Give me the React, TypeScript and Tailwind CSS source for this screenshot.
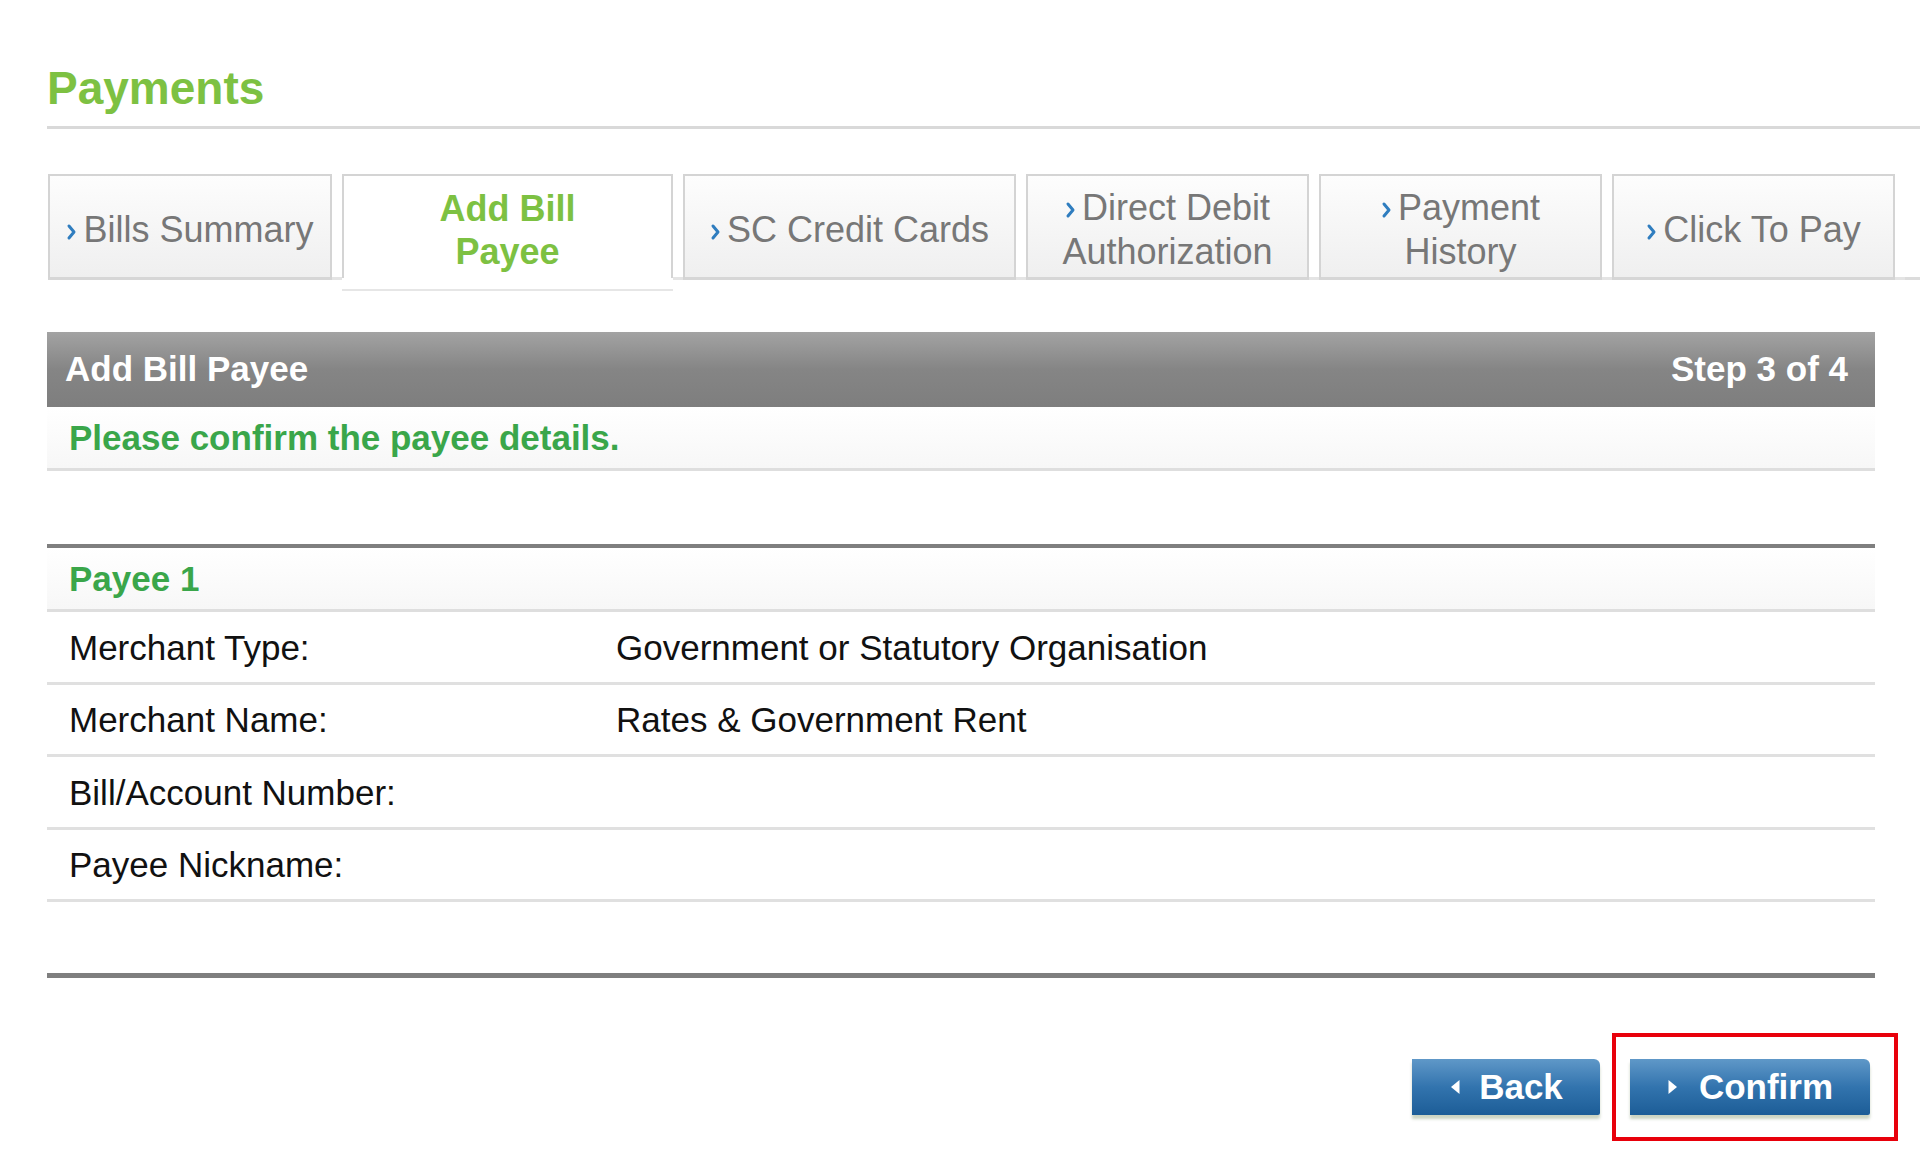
import React from 'react';

interface Tab {
  label: string[];
  active?: boolean;
  width: string;
}

const tabs: Tab[] = [
  { label: ['Bills Summary'], width: 'w-[284px]' },
  { label: ['Add Bill', 'Payee'], active: true, width: 'w-[331px]' },
  { label: ['SC Credit Cards'], width: 'w-[333px]' },
  { label: ['Direct Debit', 'Authorization'], width: 'w-[283px]' },
  { label: ['Payment', 'History'], width: 'w-[283px]' },
  { label: ['Click To Pay'], width: 'w-[283px]' },
];

const rows = [
  { label: 'Merchant Type:', value: 'Government or Statutory Organisation' },
  { label: 'Merchant Name:', value: 'Rates & Government Rent' },
  { label: 'Bill/Account Number:', value: '' },
  { label: 'Payee Nickname:', value: '' },
];

function Chevron() {
  return (
    <svg className="inline-block w-[11px] h-[18px] mr-[6px] align-[1px]" viewBox="0 0 11 18" fill="none">
      <path d="M3 3l5 6-5 6" stroke="#2f7dbf" strokeWidth={3} strokeLinecap="round" strokeLinejoin="round" />
    </svg>
  );
}

function Triangle({ dir }: { dir: 'left' | 'right' }) {
  return (
    <svg className="w-[12px] h-[18px] shrink-0" viewBox="0 0 12 18">
      {dir === 'left' ? <path d="M10.5 2v14L2 9z" fill="#fff" /> : <path d="M1.5 2v14L10 9z" fill="#fff" />}
    </svg>
  );
}

export default function App() {
  return (
    <div className="min-h-screen bg-white text-[#111]" style={{ fontFamily: '"Liberation Sans", Arial, sans-serif' }}>
      {/* Page title */}
      <div className="pl-[47px] pt-[62px]">
        <h1 className="text-[46px] leading-[52px] font-bold text-[#7dc142]">Payments</h1>
        <div className="mt-[12px] h-[3px] bg-[#d9d9d9]" />
      </div>

      {/* Tabs */}
      <div className="mt-[45px] pl-[48px] flex items-start">
        {tabs.map((tab, i) => (
          <React.Fragment key={i}>
            {tab.active ? (
              <div className={`${tab.width} shrink-0 h-[117px] flex flex-col`}>
                <div className="h-[104px] pt-[6px] bg-white border-x-2 border-t-2 border-[#d4d4d4] flex flex-col items-center justify-center text-[36px] leading-[43px] font-bold text-[#7dc142]">
                  {tab.label.map((l) => (
                    <span key={l}>{l}</span>
                  ))}
                </div>
                <div className="h-[11px]" />
                <div className="h-[2px] bg-[#e6e6e6]" />
              </div>
            ) : (
              <div
                className={`${tab.width} shrink-0 h-[106px] pt-[6px] bg-gradient-to-b from-[#fdfdfd] to-[#efefef] border-2 border-[#d4d4d4] border-b-[3px] border-b-[#d6d6d6] flex flex-col items-center justify-center text-[36px] leading-[44px] text-[#777]`}
              >
                {tab.label.map((l, j) => (
                  <span key={l} className="whitespace-nowrap">
                    {j === 0 && <Chevron />}
                    {l}
                  </span>
                ))}
              </div>
            )}
            <div className="w-[10px] shrink-0 h-[106px] flex flex-col justify-end">
              <div className="h-[3px] bg-[#e4e4e4]" />
            </div>
          </React.Fragment>
        ))}
        <div className="flex-1 h-[106px] flex flex-col justify-end">
          <div className="h-[3px] bg-[#dcdcdc]" />
        </div>
      </div>

      {/* Panel */}
      <div className="mr-[45px] ml-[47px] mt-[41px]">
        <div className="h-[75px] bg-gradient-to-b from-[#a3a3a3] via-[#858585] to-[#7e7e7e] flex items-center justify-between pl-[18px] pr-[27px] text-white font-bold text-[35px]">
          <span>Add Bill Payee</span>
          <span>Step 3 of 4</span>
        </div>
        <div className="h-[64px] pt-[2px] bg-gradient-to-b from-white to-[#f7f7f7] border-b-[3px] border-[#dedede] flex items-center pl-[22px] text-[35px] font-bold text-[#3aa64a]">
          Please confirm the payee details.
        </div>

        <div className="h-[73px]" />

        <div className="h-[4px] bg-[#7f7f7f]" />
        <div className="h-[64px] pt-[2px] bg-gradient-to-b from-white to-[#f7f7f7] border-b-[3px] border-[#dedede] flex items-center pl-[22px] text-[35px] font-bold text-[#3aa64a]">
          Payee 1
        </div>
        {rows.map((r) => (
          <div key={r.label} className="h-[72.5px] pt-[2px] border-b-[3px] border-[#e0e0e0] flex items-center text-[35px] text-[#111]">
            <div className="w-[569px] pl-[22px] shrink-0">{r.label}</div>
            <div>{r.value}</div>
          </div>
        ))}

        <div className="h-[71px]" />
        <div className="h-[5px] bg-[#7f7f7f]" />

        {/* Actions */}
        <div className="flex justify-end items-center gap-[12px] pt-[81px] -mr-[23px]">
          <button className="w-[188px] h-[56px] rounded-tr-[6px] rounded-br-[2px] bg-gradient-to-b from-[#5f98c8] via-[#3274ae] to-[#1c5d97] shadow-[0_4px_3px_rgba(140,160,120,0.45)] flex items-center justify-center gap-[18px] text-white font-bold text-[35px]">
            <Triangle dir="left" />
            <span>Back</span>
          </button>
          <div className="border-[4px] border-[#e8000b] pl-[14px] pr-[24px] pt-[22px] pb-[22px] -my-[26px]">
            <button className="w-[240px] h-[56px] rounded-tr-[6px] rounded-br-[2px] bg-gradient-to-b from-[#5f98c8] via-[#3274ae] to-[#1c5d97] shadow-[0_4px_3px_rgba(140,160,120,0.45)] flex items-center justify-center gap-[20px] text-white font-bold text-[35px]">
              <Triangle dir="right" />
              <span>Confirm</span>
            </button>
          </div>
        </div>
      </div>
    </div>
  );
}
